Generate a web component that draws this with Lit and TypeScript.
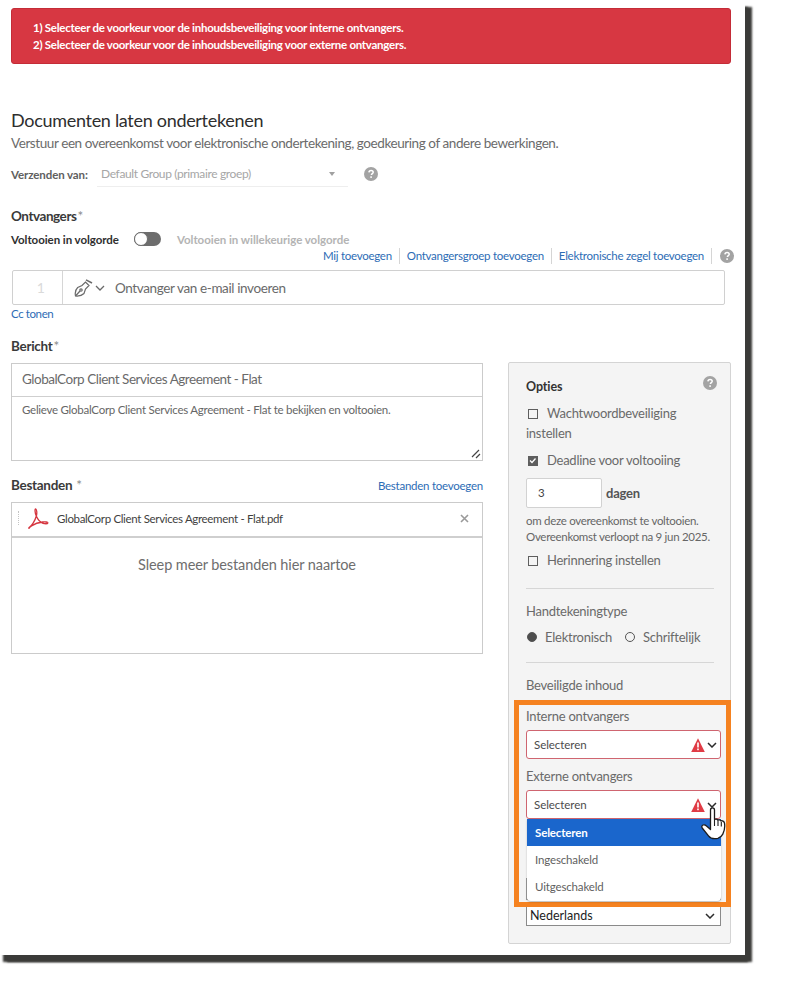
import { LitElement, html, css } from 'lit';
import { customElement } from 'lit/decorators.js';

const help = (cls = '') => html`<svg class="help ${cls}" width="14" height="14" viewBox="0 0 14 14">
  <circle cx="7" cy="7" r="7" fill="#a3a3a3"></circle>
  <path d="M4.9 5.4c.1-1.3 1-2 2.2-2 1.200 0 2.100.7 2.100 1.800 0 1.500-1.800 1.500-1.800 2.900" fill="none" stroke="#fff" stroke-width="1.500"></path>
  <rect x="6.300" y="9.300" width="1.600" height="1.600" fill="#fff"></rect>
</svg>`;

const chevron = () => html`<svg class="chev" width="10" height="6" viewBox="0 0 10 6">
  <path d="M1 1l4 4 4-4" fill="none" stroke="#2c2c2c" stroke-width="1.500"></path>
</svg>`;

const warning = () => html`<svg width="14" height="14" viewBox="0 0 14 14">
  <path d="M7 .3L13.800 14H.2z" fill="#e03b45"></path>
  <rect x="6.200" y="4.500" width="1.600" height="5" fill="#fff"></rect>
  <rect x="6.200" y="10.500" width="1.600" height="1.700" fill="#fff"></rect>
</svg>`;

@customElement('app-root')
export class AppRoot extends LitElement {
  static styles = css`
    :host {
      display: block;
      width: 800px;
      height: 982px;
      background: #fff;
      font-family: 'Lato', 'Liberation Sans', sans-serif;
      font-size: 13px;
      color: #6e6e6e;
    }

    .sheet {
      box-sizing: border-box;
      width: 745px;
      height: 955px;
      padding: 8px 14px 0 11px;
      background: #fff;
      box-shadow: 7px 7px 2px #3b3b39, 3px 7px 2px #3b3b39;
    }

    .alert {
      box-sizing: border-box;
      height: 56px;
      padding: 10px 21px;
      background: #d73742;
      border: 1px solid #c42c37;
      border-radius: 3px;
      color: #fff;
      font-size: 11.500px;
      font-weight: 700;
      line-height: 17px;
      letter-spacing: -0.27px;
    }

    h1 {
      margin: 44px 0 0;
      font-size: 18px;
      font-weight: 400;
      line-height: 24px;
      color: #2e2e2e;
      letter-spacing: -0.3px;
    }

    .sub {
      margin-top: 1px;
      font-size: 13.500px;
      line-height: 20px;
      color: #6b6b6b;
      letter-spacing: -0.42px;
    }

    .sender {
      display: flex;
      align-items: center;
      height: 24px;
      margin-top: 9px;
    }

    .sender-label {
      width: 86px;
      font-size: 11.500px;
      font-weight: 700;
      color: #606060;
      letter-spacing: -0.1px;
    }

    .sender-select {
      box-sizing: border-box;
      display: flex;
      align-items: center;
      justify-content: space-between;
      width: 251px;
      height: 25px;
      padding: 0 13px 0 4px;
      border-bottom: 1px solid #eeeeee;
      font-size: 12px;
      color: #a6a6a6;
      letter-spacing: -0.37px;
    }

    .caret {
      width: 0;
      height: 0;
      border: 3.500px solid transparent;
      border-top: 4px solid #a0a0a0;
      border-bottom: 0;
    }

    .sender .help {
      margin-left: 16px;
    }

    .label {
      font-size: 13.500px;
      font-weight: 700;
      line-height: 20px;
      color: #3a3a3a;
      letter-spacing: -0.3px;
    }

    .label i {
      font-style: normal;
      font-weight: 400;
      color: #8a8a8a;
      margin-left: 1px;
    }

    .recipients-label {
      margin-top: 20px;
      letter-spacing: -0.45px;
    }

    .order {
      display: flex;
      align-items: center;
      height: 18px;
      margin-top: 4px;
      font-size: 11.500px;
      font-weight: 700;
      letter-spacing: -0.05px;
      color: #2f2f2f;
    }

    .toggle {
      position: relative;
      box-sizing: border-box;
      width: 27px;
      height: 14px;
      margin: 0 16px 0 15px;
      border-radius: 7px;
      background: #6d6d6d;
    }

    .toggle::before {
      content: '';
      position: absolute;
      left: 0;
      top: 0;
      box-sizing: border-box;
      width: 14px;
      height: 14px;
      border-radius: 50%;
      background: #fff;
      border: 1.500px solid #6d6d6d;
    }

    .order .muted {
      color: #b4b4b4;
      letter-spacing: -0.03px;
    }

    .links {
      display: flex;
      justify-content: flex-end;
      align-items: center;
      height: 16px;
      margin-right: -3px;
      font-size: 11.500px;
      letter-spacing: -0.27px;
      color: #2d6cb5;
    }

    .links span {
      padding: 0 7px;
      border-right: 1px solid #d5d5d5;
      line-height: 16px;
    }

    .links .help {
      margin-left: 8px;
    }

    .recipient {
      box-sizing: border-box;
      display: flex;
      align-items: center;
      width: 713px;
      height: 35px;
      margin: 6px 0 0 1px;
      border: 1px solid #d0d0d0;
      border-radius: 2px;
      font-size: 13.500px;
      color: #6a6a6a;
      letter-spacing: -0.38px;
    }

    .recipient .num {
      box-sizing: border-box;
      display: flex;
      align-items: center;
      justify-content: center;
      flex: none;
      width: 50px;
      height: 100%;
      padding-left: 6px;
      border-right: 1px solid #d6d6d6;
      color: #dadada;
      font-size: 14px;
    }

    .recipient .pen {
      display: flex;
      align-items: center;
      gap: 1px;
      margin: 0 10px 0 11px;
    }

    .cc {
      margin-top: 2px;
      font-size: 11.500px;
      line-height: 14px;
      letter-spacing: -0.4px;
      color: #2d6cb5;
    }

    .columns {
      display: grid;
      grid-template-columns: 472px 223px;
      column-gap: 25px;
      margin-top: 15px;
      align-items: start;
    }

    .message {
      box-sizing: border-box;
      height: 98px;
      margin-top: 7px;
      border: 1px solid #cbcbcb;
      position: relative;
    }

    .message .subject {
      box-sizing: border-box;
      height: 33px;
      padding: 0 10px;
      border-bottom: 1px solid #cfcfcf;
      font-size: 13.500px;
      line-height: 30px;
      color: #6a6a6a;
      letter-spacing: -0.48px;
    }

    .message .body {
      padding: 5px 10px;
      font-size: 11.500px;
      line-height: 16px;
      color: #666;
      letter-spacing: -0.26px;
    }

    .grip {
      position: absolute;
      right: 1px;
      bottom: 1px;
    }

    .files-head {
      display: flex;
      justify-content: space-between;
      align-items: center;
      margin-top: 14px;
    }

    .files-head a {
      font-size: 11.500px;
      color: #2d6cb5;
      letter-spacing: -0.25px;
    }

    .files {
      box-sizing: border-box;
      height: 152px;
      margin-top: 7px;
      border: 1px solid #cbcbcb;
    }

    .file {
      box-sizing: border-box;
      display: flex;
      align-items: center;
      height: 35px;
      padding: 0 13px 3px 6px;
      border-bottom: 2px solid #cfcfcf;
      font-size: 11.500px;
      color: #3f3f3f;
      letter-spacing: -0.33px;
    }

    .file .dots {
      width: 0;
      height: 14px;
      border-left: 1px dotted #c4c4c4;
    }

    .file svg.pdf {
      margin: 0 8px 0 9px;
    }

    .file .x {
      margin-left: auto;
    }

    .drop {
      margin-top: 17px;
      text-align: center;
      font-size: 14.500px;
      line-height: 20px;
      color: #6e6e6e;
      letter-spacing: -0.1px;
    }

    .panel {
      box-sizing: border-box;
      height: 582px;
      margin-top: 26px;
      padding: 14px 9px 0 17px;
      background: #f4f4f4;
      border: 1px solid #d4d4d4;
      border-radius: 2px;
      font-size: 13px;
      line-height: 20px;
      letter-spacing: -0.25px;
      color: #6a6a6a;
    }

    .panel-head {
      display: flex;
      justify-content: space-between;
      align-items: flex-start;
      padding-right: 4px;
      font-size: 12.500px;
      font-weight: 700;
      letter-spacing: -0.1px;
      color: #333;
    }

    .panel-head .help {
      margin-top: -1px;
    }

    .check {
      display: inline-block;
      box-sizing: border-box;
      width: 10px;
      height: 10px;
      margin: 0 9px 0 2px;
      border: 1.500px solid #5e5e5e;
      vertical-align: -0.5px;
    }

    .check.on {
      background: #5e5e5e;
      position: relative;
    }

    .check.on svg {
      position: absolute;
      left: 0;
      top: 0;
    }

    .opt {
      margin-top: 7px;
    }

    .panel-head + .opt {
      margin-top: 6px;
    }

    .days {
      display: flex;
      align-items: center;
      gap: 4px;
      margin-top: 8px;
      font-weight: 700;
      color: #555;
    }

    .days .num {
      box-sizing: border-box;
      width: 76px;
      height: 30px;
      padding-left: 11px;
      background: #fff;
      border: 1px solid #d2d2d2;
      border-radius: 2px;
      font-size: 11.500px;
      font-weight: 400;
      line-height: 28px;
      color: #444;
    }

    .note {
      margin-top: 5px;
      font-size: 11.500px;
      line-height: 16px;
      letter-spacing: -0.3px;
      color: #666;
      white-space: nowrap;
    }

    .opt.reminder {
      margin-top: 5px;
    }

    .rule {
      height: 1px;
      margin-top: 18px;
      margin-right: 7px;
      background: #d6d6d6;
    }

    .heading {
      margin-top: 12px;
    }

    .radios {
      display: flex;
      align-items: center;
      margin-top: 6px;
      margin-bottom: 15px;
    }

    .radios + .rule {
      margin-top: 0;
    }

    .radio {
      box-sizing: border-box;
      width: 10px;
      height: 10px;
      margin: 0 8px 0 1px;
      border-radius: 50%;
      border: 1.500px solid #555;
    }

    .radio.on {
      background: #4d4d4d;
    }

    .radios .gap {
      margin-left: 13px;
    }

    .callout {
      box-sizing: border-box;
      height: 207px;
      margin: 5px -10px 0 -12px;
      padding: 1px 5px 0 7px;
      border: 5px solid #f58220;
    }

    .select-wrap {
      position: relative;
      margin-top: 4px;
    }

    .select {
      box-sizing: border-box;
      display: flex;
      align-items: center;
      height: 29px;
      padding: 0 3px 0 7px;
      background: #fff;
      border: 1px solid #cf6570;
      border-radius: 3px;
      font-size: 11.500px;
      letter-spacing: -0.05px;
      color: #4c4c4c;
    }

    .select svg:first-of-type {
      margin-left: auto;
      margin-right: 2px;
    }

    .second {
      margin-top: 7px;
    }

    .menu {
      position: absolute;
      z-index: 2;
      left: 1px;
      right: 0;
      top: 100%;
      height: 82px;
      background: #fff;
      border-radius: 0 0 4px 4px;
      box-shadow: 0 1px 2px rgba(0, 0, 0, 0.25);
      overflow: hidden;
      font-size: 11.500px;
      line-height: 27px;
      letter-spacing: -0.15px;
      color: #5f5f5f;
    }

    .menu div {
      height: 27px;
      padding-left: 8px;
    }

    .menu .active {
      background: #1a66cc;
      color: #fff;
      font-weight: 700;
    }

    .hand {
      position: absolute;
      z-index: 3;
      right: -6px;
      top: 17px;
    }

    .behind {
      box-sizing: border-box;
      height: 22px;
      margin-top: 59px;
      background: #fff;
      border: 1px solid #9a9a9a;
      border-top: 0;
    }

    .language {
      box-sizing: border-box;
      display: flex;
      align-items: center;
      justify-content: space-between;
      height: 19px;
      padding: 0 5px 0 3px;
      background: #fff;
      border: 1px solid #8a8a8a;
      border-top: 0;
      font-size: 12.500px;
      letter-spacing: 0;
      color: #1d1d1d;
    }
  `;

  render() {
    return html`
      <div class="sheet">
        <div class="alert">
          <div>1) Selecteer de voorkeur voor de inhoudsbeveiliging voor interne ontvangers.</div>
          <div>2) Selecteer de voorkeur voor de inhoudsbeveiliging voor externe ontvangers.</div>
        </div>

        <h1>Documenten laten ondertekenen</h1>
        <div class="sub">Verstuur een overeenkomst voor elektronische ondertekening, goedkeuring of andere bewerkingen.</div>

        <div class="sender">
          <div class="sender-label">Verzenden van:</div>
          <div class="sender-select"><span>Default Group (primaire groep)</span><span class="caret"></span></div>
          ${help()}
        </div>

        <div class="label recipients-label">Ontvangers<i>*</i></div>
        <div class="order">
          <span>Voltooien in volgorde</span>
          <span class="toggle"></span>
          <span class="muted">Voltooien in willekeurige volgorde</span>
        </div>
        <div class="links">
          <span>Mij toevoegen</span>
          <span>Ontvangersgroep toevoegen</span>
          <span>Elektronische zegel toevoegen</span>
          ${help()}
        </div>

        <div class="recipient">
          <div class="num">1</div>
          <div class="pen">
            <svg width="20" height="18" viewBox="0 0 20 18" fill="none" stroke="#6a6a6a" stroke-width="1.200">
              <path d="M1.500 17c-.6-3 .1-6.500 2.200-8.500L8 6.500l3.500-3.500 3.500 3.500-3.500 3.500-1.500 4.500c-2 2-5.500 2.800-8.500 2.500z"></path>
              <path d="M1.500 17l4.500-5"></path>
              <circle cx="7" cy="11" r="1.200"></circle>
              <path d="M12 .8l6 3.200" stroke-width="1.500"></path>
            </svg>
            <svg width="10" height="6" viewBox="0 0 10 6"><path d="M1 1l4 4 4-4" fill="none" stroke="#6a6a6a" stroke-width="1.300"></path></svg>
          </div>
          <span>Ontvanger van e-mail invoeren</span>
        </div>
        <div class="cc">Cc tonen</div>

        <div class="columns">
          <div>
            <div class="label">Bericht<i>*</i></div>
            <div class="message">
              <div class="subject">GlobalCorp Client Services Agreement - Flat</div>
              <div class="body">Gelieve GlobalCorp Client Services Agreement - Flat te bekijken en voltooien.</div>
              <svg class="grip" width="10" height="10" viewBox="0 0 10 10" stroke="#444" stroke-width="1.200">
                <path d="M1 8l7-7M5 9l4-4"></path>
              </svg>
            </div>

            <div class="files-head">
              <div class="label">Bestanden<i> *</i></div>
              <a>Bestanden toevoegen</a>
            </div>
            <div class="files">
              <div class="file">
                <span class="dots"></span>
                <svg class="pdf" width="21" height="21" viewBox="0 0 21 21" fill="none" stroke="#d5353f" stroke-width="1.300">
                  <path d="M1 19.500c2.500-1 6-6.500 7.500-12 .6-2.500.3-6-.8-6.500-1-.2-.9 3.500.6 7 1.700 4 4.300 6.500 6.700 7.300 1.600.5 4.500.8 4.800-.3.200-1-2.600-1.300-5.100-1-3.500.4-8 1.800-11.200 3.900-1.500 1-3 2.500-2.500 2.600z"></path>
                </svg>
                <span>GlobalCorp Client Services Agreement - Flat.pdf</span>
                <svg class="x" width="9" height="9" viewBox="0 0 9 9" stroke="#9a9a9a" stroke-width="1.600"><path d="M1 1l7 7M8 1L1 8"></path></svg>
              </div>
              <div class="drop">Sleep meer bestanden hier naartoe</div>
            </div>
          </div>

          <div class="panel">
            <div class="panel-head"><span>Opties</span>${help()}</div>
            <div class="opt"><span class="check"></span>Wachtwoordbeveiliging instellen</div>
            <div class="opt">
              <span class="check on"><svg width="7" height="7" viewBox="0 0 7 7"><path d="M1 3.500l2 2 3.500-4" fill="none" stroke="#fff" stroke-width="1.300"></path></svg></span>Deadline voor voltooiing
            </div>
            <div class="days"><div class="num">3</div><span>dagen</span></div>
            <div class="note">om deze overeenkomst te voltooien.<br />Overeenkomst verloopt na 9 jun 2025.</div>
            <div class="opt reminder"><span class="check"></span>Herinnering instellen</div>
            <div class="rule"></div>
            <div class="heading">Handtekeningtype</div>
            <div class="radios">
              <span class="radio on"></span><span>Elektronisch</span>
              <span class="radio gap"></span><span>Schriftelijk</span>
            </div>
            <div class="rule"></div>
            <div class="heading">Beveiligde inhoud</div>

            <div class="callout">
              <div>Interne ontvangers</div>
              <div class="select-wrap">
                <div class="select"><span>Selecteren</span>${warning()}${chevron()}</div>
              </div>
              <div class="second">Externe ontvangers</div>
              <div class="select-wrap">
                <div class="select"><span>Selecteren</span>${warning()}${chevron()}</div>
                <div class="menu">
                  <div class="active">Selecteren</div>
                  <div>Ingeschakeld</div>
                  <div>Uitgeschakeld</div>
                </div>
                <svg class="hand" width="26" height="33" viewBox="0 0 26 33">
                  <path d="M9.500 3c0-1.300 1-2.200 2-2.200s2 .9 2 2.200v9.500c1.500-.7 2.700-.5 3.300.6 1.200-.6 2.500-.3 3 .8 1.400-.5 3.400.2 3.700 2.200.5 3-.2 8-1.700 11-1 2-2.300 3.500-5 4.200-3.500.8-7.300.2-9.300-2.500L1.200 21c-.8-1.200-.3-2.500.8-3 1.300-.5 2.500 0 3.500 1l4 3.500z" fill="#fff" stroke="#1c1c1c" stroke-width="1.300" stroke-linejoin="round"></path>
                  <path d="M13.500 13v6M17 13.500v5.500M20.300 15v4.500" fill="none" stroke="#1c1c1c" stroke-width="1.100"></path>
                </svg>
              </div>
              <div class="behind"></div>
            </div>

            <div class="language"><span>Nederlands</span>${chevron()}</div>
          </div>
        </div>
      </div>
    `;
  }
}
